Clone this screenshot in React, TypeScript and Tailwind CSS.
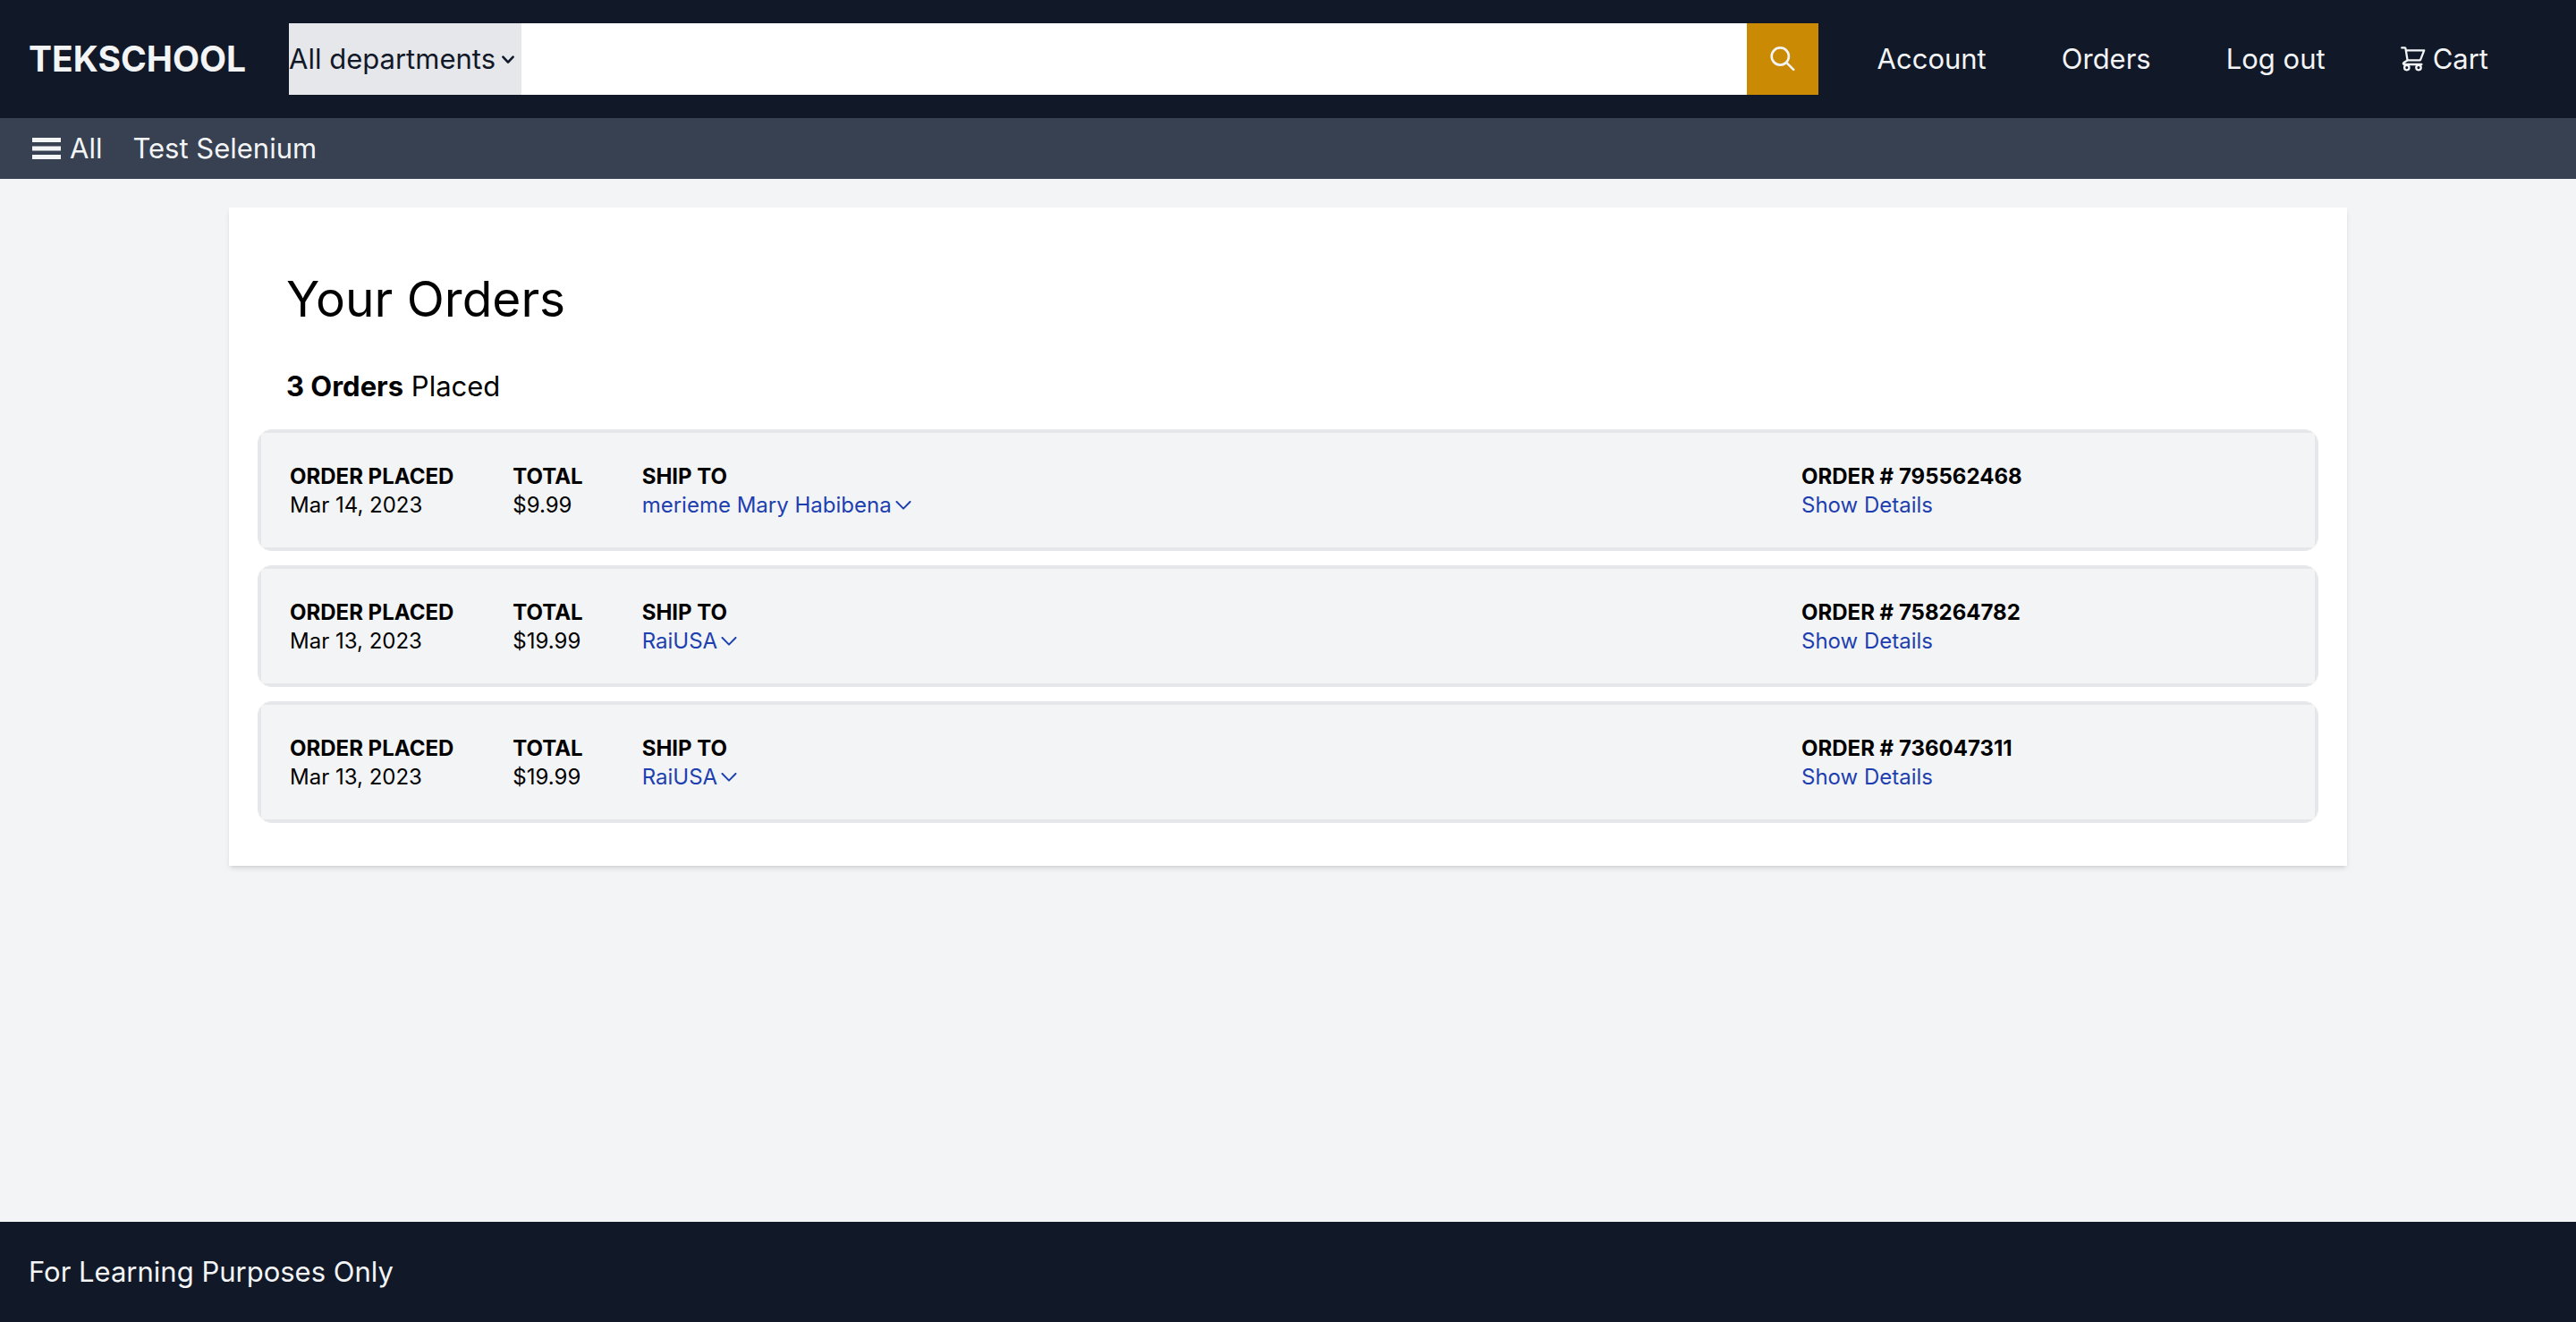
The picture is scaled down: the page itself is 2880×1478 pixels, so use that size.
const orders = [
  { id: "795562468", date: "Mar 14, 2023", total: "$9.99", shipTo: "merieme Mary Habibena" },
  { id: "758264782", date: "Mar 13, 2023", total: "$19.99", shipTo: "RaiUSA" },
  { id: "736047311", date: "Mar 13, 2023", total: "$19.99", shipTo: "RaiUSA" },
];

const stroke = {
  fill: "none",
  stroke: "currentColor",
  strokeLinecap: "round",
  strokeLinejoin: "round",
  "aria-hidden": true,
} as const;

function SearchIcon() {
  return (
    <svg viewBox="0 0 28 28" className="size-7" strokeWidth="2.6" {...stroke}>
      <circle cx="11.3" cy="11" r="9.6" />
      <path d="M18.2 17.8l8 8" />
    </svg>
  );
}

function CartIcon() {
  return (
    <svg viewBox="0 0 28 28" className="size-7" strokeWidth="2.3" {...stroke}>
      <path d="M1.2 1.4h3.4a.9.9 0 0 1 .9.8L7.6 15.4h13.6a1 1 0 0 0 .9-.6L26.2 4.4H5.8" />
      <path d="M7.6 15.4l-4 2.6c-1.2.9-.7 2 .6 2h19.2" />
      <circle cx="6.8" cy="23.6" r="2.7" />
      <circle cx="20" cy="23.6" r="2.7" />
    </svg>
  );
}

function TopBar() {
  return (
    <header className="flex h-[132px] items-center bg-[#111827] text-[#f3f4f6]">
      <a href="#" className="ml-8 mr-12 shrink-0 text-[39px] leading-[56px] font-bold">
        TEKSCHOOL
      </a>
      <form className="flex h-20 min-w-0 grow" onSubmit={(e) => e.preventDefault()}>
        <div className="relative flex shrink-0 bg-[#e5e7eb] text-[#111827]">
          <select
            aria-label="Department"
            defaultValue="all"
            className="w-[260px] appearance-none bg-transparent outline-none"
          >
            <option value="all">All departments</option>
            <option value="electronics">Electronics</option>
            <option value="computers">Computers</option>
          </select>
          <svg
            viewBox="0 0 14 10"
            className="pointer-events-none absolute top-9 right-2 h-[10px] w-[14px]"
            strokeWidth="2.6"
            {...stroke}
          >
            <path d="M1.4 1.6l5.6 6 5.6-6" />
          </svg>
        </div>
        <input
          type="text"
          aria-label="Search products"
          className="min-w-0 grow bg-white px-4 text-[#111827] outline-none"
        />
        <button
          type="submit"
          aria-label="Search"
          className="flex w-20 shrink-0 items-center justify-center bg-[#ca8a04]"
        >
          <SearchIcon />
        </button>
      </form>
      <nav className="mr-[98px] ml-[66px] flex shrink-0 items-center gap-[84px]">
        <a href="#">Account</a>
        <a href="#">Orders</a>
        <a href="#">Log out</a>
        <a href="#" className="flex items-center gap-2">
          <CartIcon />
          Cart
        </a>
      </nav>
    </header>
  );
}

function SubNav() {
  return (
    <div className="flex h-[68px] items-center gap-[34px] bg-[#374151] px-9 text-[#f3f4f6]">
      <button type="button" className="flex items-center gap-2.5">
        <svg viewBox="0 0 32 24" className="h-6 w-8" fill="currentColor" aria-hidden>
          <path d="M0 0h32v5H0zM0 9.5h32v5H0zM0 19h32v5H0z" />
        </svg>
        All
      </button>
      <a href="#">Test Selenium</a>
    </div>
  );
}

function OrderCard({ order }: { order: (typeof orders)[number] }) {
  return (
    <article className="rounded-2xl border-4 border-[#e5e7eb] text-2xl leading-8">
      <div className="flex items-start bg-[#f3f4f6] px-8 pt-[33px] pb-[31px]">
        <dl className="flex grow gap-[66px]">
          <div>
            <dt className="font-bold">ORDER PLACED</dt>
            <dd>{order.date}</dd>
          </div>
          <div>
            <dt className="font-bold">TOTAL</dt>
            <dd>{order.total}</dd>
          </div>
          <div>
            <dt className="font-bold">SHIP TO</dt>
            <dd>
              <button type="button" className="flex items-center gap-1 text-[#1e40af]">
                {order.shipTo}
                <svg viewBox="0 0 18 10" className="h-[10px] w-[18px]" strokeWidth="2" {...stroke}>
                  <path d="M1.5 1l7.5 7.6L16.5 1" />
                </svg>
              </button>
            </dd>
          </div>
        </dl>
        <div className="w-[542px] shrink-0">
          <p className="font-bold">ORDER # {order.id}</p>
          <a href="#" className="text-[#1e40af]">
            Show Details
          </a>
        </div>
      </div>
    </article>
  );
}

export default function App() {
  return (
    <div className="flex min-h-screen flex-col bg-[#f3f4f6] font-['Inter',sans-serif] text-[31px] leading-[48px] text-black">
      <TopBar />
      <SubNav />
      <main className="grow px-64 pt-8">
        <section className="bg-white px-8 pt-16 pb-12 shadow-md">
          <h1 className="px-8 text-[55px] leading-[76px]">Your Orders</h1>
          <p className="mt-9 mb-6 px-8">
            <span className="font-bold">3 Orders</span> Placed
          </p>
          <div className="flex flex-col gap-4">
            {orders.map((order) => (
              <OrderCard key={order.id} order={order} />
            ))}
          </div>
        </section>
      </main>
      <footer className="bg-[#111827] px-8 py-8 text-[#f3f4f6]">For Learning Purposes Only</footer>
    </div>
  );
}
